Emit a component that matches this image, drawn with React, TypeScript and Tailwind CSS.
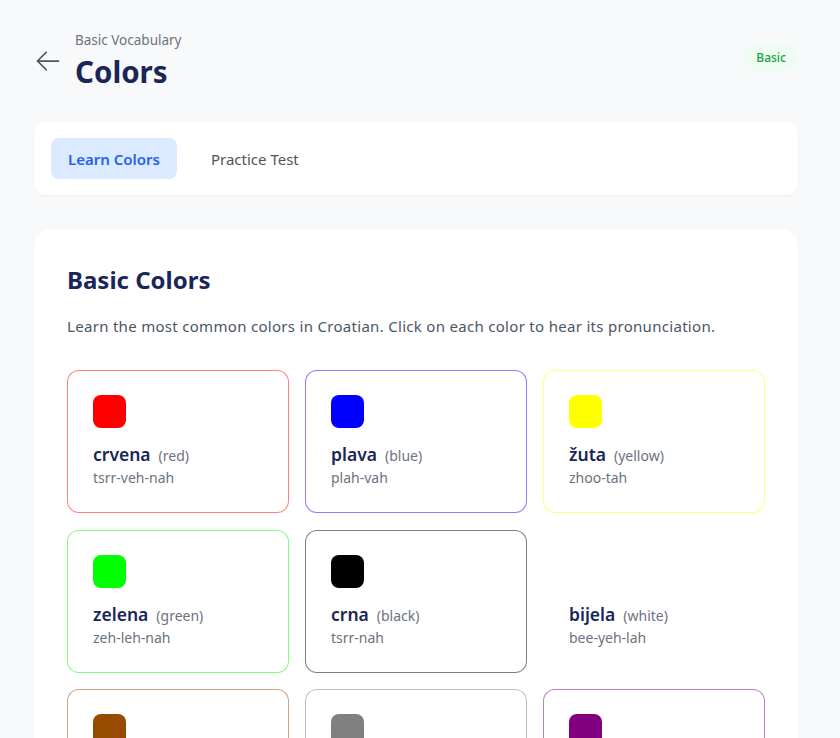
const colors = [
  { hr: "crvena", en: "red", say: "tsrr-veh-nah", swatch: "bg-[#ff0000]", border: "border-[#ff000080]" },
  { hr: "plava", en: "blue", say: "plah-vah", swatch: "bg-[#0000ff]", border: "border-[#0000ff80]" },
  { hr: "žuta", en: "yellow", say: "zhoo-tah", swatch: "bg-[#ffff00]", border: "border-[#ffff0080]" },
  { hr: "zelena", en: "green", say: "zeh-leh-nah", swatch: "bg-[#00ff00]", border: "border-[#00ff0080]" },
  { hr: "crna", en: "black", say: "tsrr-nah", swatch: "bg-[#000000]", border: "border-[#00000080]" },
  { hr: "bijela", en: "white", say: "bee-yeh-lah", swatch: "bg-[#ffffff]", border: "border-[#ffffff80]" },
  { hr: "smeđa", en: "brown", say: "smeh-jah", swatch: "bg-[#964b00]", border: "border-[#964b0080]" },
  { hr: "siva", en: "gray", say: "see-vah", swatch: "bg-[#808080]", border: "border-[#80808080]" },
  { hr: "ljubičasta", en: "purple", say: "lyoo-bee-chahs-tah", swatch: "bg-[#800080]", border: "border-[#80008080]" },
];

function BackArrow() {
  return (
    <svg viewBox="0 0 24 24" fill="none" stroke="currentColor" strokeWidth={1.5} className="h-7 w-7">
      <path strokeLinecap="round" strokeLinejoin="round" d="M10.5 19.5 3 12m0 0 7.5-7.5M3 12h18" />
    </svg>
  );
}

export default function App() {
  return (
    <div className="min-h-screen bg-[#f8f9fb] pt-[30px] pr-[42px] pb-10 pl-[34px] font-['Noto_Sans',sans-serif]">
      {/* Header */}
      <div className="flex items-start justify-between">
        <div className="flex items-center gap-[13px]">
          <button className="mt-[2px] text-[#4b5563]">
            <BackArrow />
          </button>
          <div>
            <p className="text-[13.5px] leading-5 text-[#6b7280]">Basic Vocabulary</p>
            <h1 className="mt-1 text-[29.5px] leading-9 font-bold text-[#1a2657]">Colors</h1>
          </div>
        </div>
        <span className="mt-[15px] rounded-full bg-[#effcf2] px-3 py-1 text-xs leading-[17px] font-medium text-[#16a34a]">
          Basic
        </span>
      </div>

      {/* Tabs */}
      <div className="mt-8 flex gap-[18px] rounded-xl bg-white px-[17px] py-4 shadow-[0_1px_3px_rgba(0,0,0,0.05)]">
        <button className="rounded-lg bg-[#dbeafe] px-[17px] pt-[11px] pb-[9px] text-[15px] leading-[21px] font-semibold text-[#2563eb]">
          Learn Colors
        </button>
        <button className="rounded-lg px-4 pt-[11px] pb-[9px] text-[15px] leading-[21px] text-[#4b5563]">Practice Test</button>
      </div>

      {/* Content */}
      <div className="mt-[34px] rounded-2xl bg-white p-[33px] shadow-[0_1px_3px_rgba(0,0,0,0.04)]">
        <h2 className="mt-[2px] text-2xl font-bold text-[#1a2657]">Basic Colors</h2>
        <p className="mt-[19px] text-[15px] leading-[22px] tracking-[0.3px] text-[#4b5563]">
          Learn the most common colors in Croatian. Click on each color to hear its pronunciation.
        </p>
        <div className="mt-[33px] grid grid-cols-3 gap-x-4 gap-y-[16.5px]">
          {colors.map((c) => (
            <div key={c.hr} className={`rounded-xl border bg-white pt-6 pr-6 pb-6 pl-[25px] ${c.border}`}>
              <div className={`h-[33px] w-[33px] rounded-lg ${c.swatch}`} />
              <div className="mt-[13px] flex items-baseline gap-2">
                <span className="text-[17.5px] leading-[26px] font-semibold text-[#1a2657]">{c.hr}</span>
                <span className="text-sm text-[#6b7280]">({c.en})</span>
              </div>
              <p className="mt-[1px] text-sm text-[#6b7280]">{c.say}</p>
            </div>
          ))}
        </div>
      </div>
    </div>
  );
}
